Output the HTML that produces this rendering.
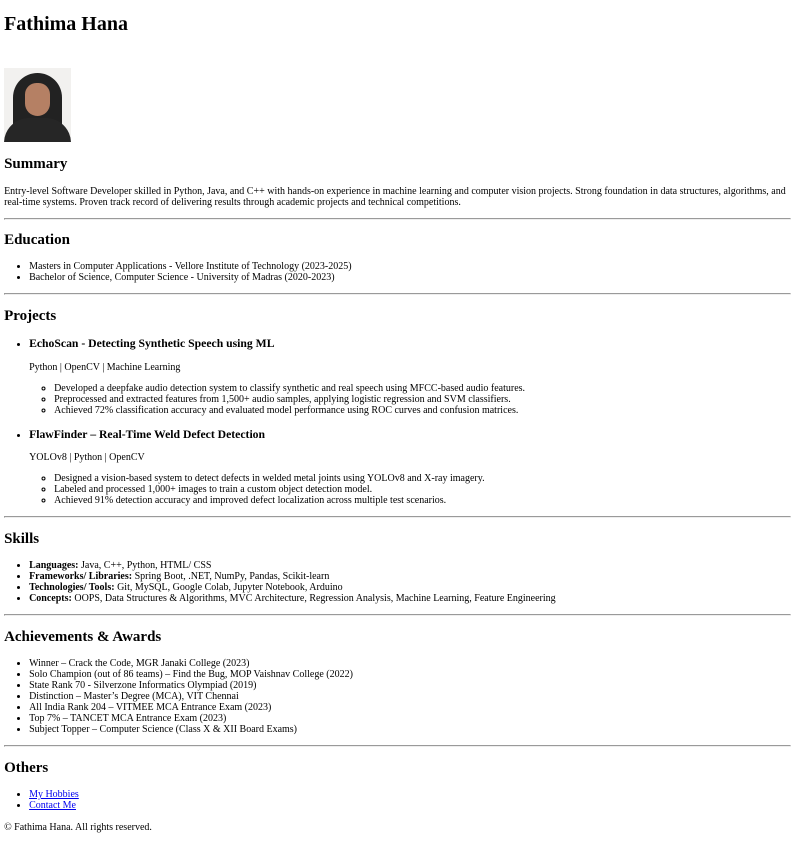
<!DOCTYPE html>
<html><head><meta charset="utf-8"><style>
html{zoom:0.625}
body{font-family:"Liberation Serif",serif;margin:6.5px;color:#000;background:#fff}
h1{margin:21px 0 0}
.photo{width:107px;height:118px;margin-top:51px;position:relative;overflow:hidden;background:#f2f1ef}
.photo .veil{position:absolute;left:14px;top:8px;width:78px;height:130px;border-radius:40px 40px 10px 10px;background:#222}
.photo .body{position:absolute;left:0;top:80px;width:107px;height:60px;border-radius:40px 40px 0 0;background:#262626}
.photo .face{position:absolute;left:33px;top:24px;width:40px;height:52px;border-radius:20px 20px 22px 22px;background:#b58064}
.sp{height:3px}
hr{margin:8px 0}
a{color:#00e}
p.foot{margin-top:18px}
</style></head><body>
<h1>Fathima Hana</h1>
<div class="photo"><div class="veil"></div><div class="body"></div><div class="face"></div></div>
<div class="sp"></div>
<h2>Summary</h2>
<p>Entry-level Software Developer skilled in Python, Java, and C++ with hands-on experience in machine learning and computer vision projects. Strong foundation in data structures, algorithms, and real-time systems. Proven track record of delivering results through academic projects and technical competitions.</p>
<hr>
<h2>Education</h2>
<ul><li>Masters in Computer Applications - Vellore Institute of Technology (2023-2025)</li><li>Bachelor of Science, Computer Science - University of Madras (2020-2023)</li></ul>
<hr>
<h2>Projects</h2>
<ul>
<li><h3>EchoScan - Detecting Synthetic Speech using ML</h3><p>Python | OpenCV | Machine Learning</p>
<ul><li>Developed a deepfake audio detection system to classify synthetic and real speech using MFCC-based audio features.</li><li>Preprocessed and extracted features from 1,500+ audio samples, applying logistic regression and SVM classifiers.</li><li>Achieved 72% classification accuracy and evaluated model performance using ROC curves and confusion matrices.</li></ul></li>
<li><h3>FlawFinder – Real-Time Weld Defect Detection</h3><p>YOLOv8 | Python | OpenCV</p>
<ul><li>Designed a vision-based system to detect defects in welded metal joints using YOLOv8 and X-ray imagery.</li><li>Labeled and processed 1,000+ images to train a custom object detection model.</li><li>Achieved 91% detection accuracy and improved defect localization across multiple test scenarios.</li></ul></li>
</ul>
<hr>
<h2>Skills</h2>
<ul><li><b>Languages:</b> Java, C++, Python, HTML/ CSS</li><li><b>Frameworks/ Libraries:</b> Spring Boot, .NET, NumPy, Pandas, Scikit-learn</li><li><b>Technologies/ Tools:</b> Git, MySQL, Google Colab, Jupyter Notebook, Arduino</li><li><b>Concepts:</b> OOPS, Data Structures &amp; Algorithms, MVC Architecture, Regression Analysis, Machine Learning, Feature Engineering</li></ul>
<hr>
<h2>Achievements &amp; Awards</h2>
<ul><li>Winner – Crack the Code, MGR Janaki College (2023)</li><li>Solo Champion (out of 86 teams) – Find the Bug, MOP Vaishnav College (2022)</li><li>State Rank 70 - Silverzone Informatics Olympiad (2019)</li><li>Distinction – Master’s Degree (MCA), VIT Chennai</li><li>All India Rank 204 – VITMEE MCA Entrance Exam (2023)</li><li>Top 7% – TANCET MCA Entrance Exam (2023)</li><li>Subject Topper – Computer Science (Class X &amp; XII Board Exams)</li></ul>
<hr>
<h2>Others</h2>
<ul><li><a href="#">My Hobbies</a></li><li><a href="#">Contact Me</a></li></ul>
<p class="foot">© Fathima Hana. All rights reserved.</p>
</body></html>
